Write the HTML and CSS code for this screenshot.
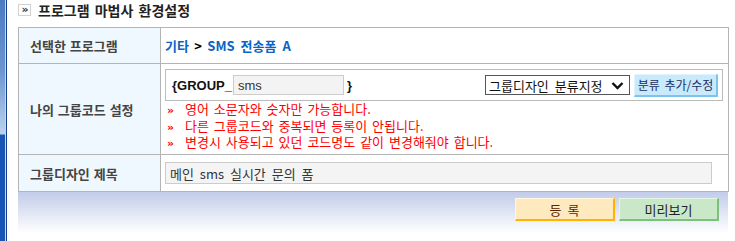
FILE: index.html
```html
<!DOCTYPE html>
<html>
<head>
    <meta charset="utf-8" />
    <title>프로그램 마법사 환경설정</title>
    <link rel="stylesheet" href="styles.css">
</head>
<body>
    <div id="frame">
        <div class="sidebar"></div>
        <div id="mainCont">
            <h1 class="heading">
                <span class="heading-icon">&raquo;</span>
                프로그램 마법사 환경설정
            </h1>
            <table class="form-table">
                <tr class="row-program">
                    <th>선택한 프로그램</th>
                    <td>
                        <span class="path">기타</span>
                        <span class="path-sep">&gt;</span>
                        <span class="path">SMS 전송폼 A</span>
                    </td>
                </tr>
                <tr class="row-code">
                    <th>나의 그룹코드 설정</th>
                    <td>
                        <div class="code-box">
                            <span class="code-wrap">{GROUP_</span>
                            <input class="code-input" type="text" value="sms" />
                            <span class="code-wrap">}</span>
                            <div class="code-tools">
                                <div class="fake-select">
                                    <span>그룹디자인 분류지정</span>
                                    <svg width="13" height="9" viewBox="0 0 13 9">
                                        <path d="M1.5 2 L6.5 7 L11.5 2" fill="none" stroke="#111" stroke-width="2.4" />
                                    </svg>
                                </div>
                                <button class="btn-cate" type="button">분류 추가/수정</button>
                            </div>
                        </div>
                        <ul class="notes">
                            <li><b>&raquo;</b>영어 소문자와 숫자만 가능합니다.</li>
                            <li><b>&raquo;</b>다른 그룹코드와 중복되면 등록이 안됩니다.</li>
                            <li><b>&raquo;</b>변경시 사용되고 있던 코드명도 같이 변경해줘야 합니다.</li>
                        </ul>
                    </td>
                </tr>
                <tr class="row-title">
                    <th>그룹디자인 제목</th>
                    <td>
                        <input class="title-input" type="text" value="메인 sms 실시간 문의 폼" />
                    </td>
                </tr>
            </table>
            <div class="actions">
                <button class="btn-save" type="button">등 록</button>
                <button class="btn-preview" type="button">미리보기</button>
            </div>
        </div>
    </div>
</body>
</html>
```

FILE: styles.css
```css
*
{
    box-sizing: border-box;
}

body
{
    margin: 0;
    background: #fff;
    font: 12px 'Liberation Sans', 'Noto Sans CJK KR', sans-serif;
    color: #000;
}

#frame
{
    display: flex;
    height: 241px;
}

.sidebar
{
    width: 7px;
    flex: none;
    border-right: 1px solid #173f8c;
    background:
        linear-gradient(to right, transparent 5px, #c4d8ee 5px),
        linear-gradient(to bottom, #4a7bc2 0, #6b95d0 70px, #bcd2ee 134px, #1856b6 135px, #1856b6 100%);
}

#mainCont
{
    padding-left: 11px;
    width: 721px;
}

.heading
{
    display: flex;
    align-items: center;
    height: 27px;
    margin: 0;
    padding-bottom: 8px;
    font: bold 14px 'Noto Sans CJK KR', sans-serif;
    word-spacing: 2px;
    color: #222;
}

.heading-icon
{
    width: 13px;
    height: 12px;
    margin-right: 7px;
    border: 1px solid #d2d2d2;
    font: bold 11px/9px 'DejaVu Sans', sans-serif;
    color: #333;
    text-align: center;
    letter-spacing: -1px;
    word-spacing: 0;
}

.form-table
{
    width: 711px;
    border-collapse: collapse;
    border: 1px solid #b4b4b4;
}

.form-table th,
.form-table td
{
    border: 1px solid #b4b4b4;
    padding: 0 0 0 4px;
}

.form-table th
{
    width: 142px;
    padding-left: 11px;
    text-align: left;
    background: #f0f8ff;
    color: #444;
    font: bold 13px 'Noto Sans CJK KR', sans-serif;
    word-spacing: 1px;
}

.row-program
{
    height: 36px;
}

.row-code
{
    height: 91px;
}

.row-title
{
    height: 37px;
}

.path
{
    color: #0a63c6;
    font: bold 13px 'Noto Sans CJK KR', sans-serif;
    word-spacing: 3px;
}

.path-sep
{
    color: #000;
    font: bold 13px 'Noto Sans CJK KR', sans-serif;
    margin: 0 2px;
}

.code-box
{
    display: flex;
    align-items: center;
    width: 558px;
    height: 32px;
    margin-top: 2px;
    padding-left: 6px;
    border: 1px solid #bbb;
}

.code-wrap
{
    font: bold 13px 'Liberation Sans', sans-serif;
    color: #111;
}

.code-input
{
    width: 111px;
    height: 20px;
    margin: 0 3px 0 1px;
    padding: 0 4px;
    border: 1px solid #ccc;
    background: #f3f3f3;
    font: 13px 'Liberation Sans', sans-serif;
    color: #333;
}

.code-tools
{
    display: flex;
    align-items: center;
    margin-left: auto;
    margin-right: 4px;
}

.fake-select
{
    display: flex;
    align-items: center;
    justify-content: space-between;
    width: 145px;
    height: 20px;
    padding: 0 5px 0 3px;
    border: 1px solid #555;
    font: 13px 'Noto Sans CJK KR', sans-serif;
    word-spacing: 3px;
    color: #111;
}

.btn-cate
{
    width: 84px;
    height: 23px;
    margin-left: 4px;
    padding: 0;
    border-style: solid;
    border-width: 1px 2px 2px 1px;
    border-color: #e4f4fe #7cc4f0 #7cc4f0 #e4f4fe;
    background: #c9e9fc;
    font: 12px 'Noto Sans CJK KR', sans-serif;
    word-spacing: 2px;
    color: #1a2f5e;
}

.notes
{
    list-style: none;
    margin: 0;
    padding: 0;
    color: #f00;
    font: 13px/16.5px 'Noto Sans CJK KR', sans-serif;
    word-spacing: 2px;
}

.notes b
{
    display: inline-block;
    width: 20px;
    padding-left: 2px;
    font: bold 11px 'DejaVu Sans', sans-serif;
}

.title-input
{
    width: 547px;
    height: 22px;
    padding: 0 4px;
    border: 1px solid #ccc;
    background: #f4f4f4;
    font: 13px 'Noto Sans CJK KR', sans-serif;
    word-spacing: 3px;
    color: #333;
}

.actions
{
    display: flex;
    justify-content: flex-end;
    gap: 4px;
    width: 710px;
    height: 41px;
    padding: 6px 9px 0 0;
    background: linear-gradient(to bottom, #c2cce9, #ffffff);
}

.actions button
{
    width: 100px;
    height: 23px;
    padding: 0;
    border-style: solid;
    border-width: 1px 2px 2px 1px;
    font: 13px 'Noto Sans CJK KR', sans-serif;
    word-spacing: 3px;
}

.btn-save
{
    border-color: #fff6e2 #ffb400 #ffb400 #fff6e2;
    background: #ffeac0;
    color: #5a2600;
}

.btn-preview
{
    border-color: #e6f6e6 #7dbf7d #7dbf7d #e6f6e6;
    background: #c8e8c8;
    color: #222;
}
```
